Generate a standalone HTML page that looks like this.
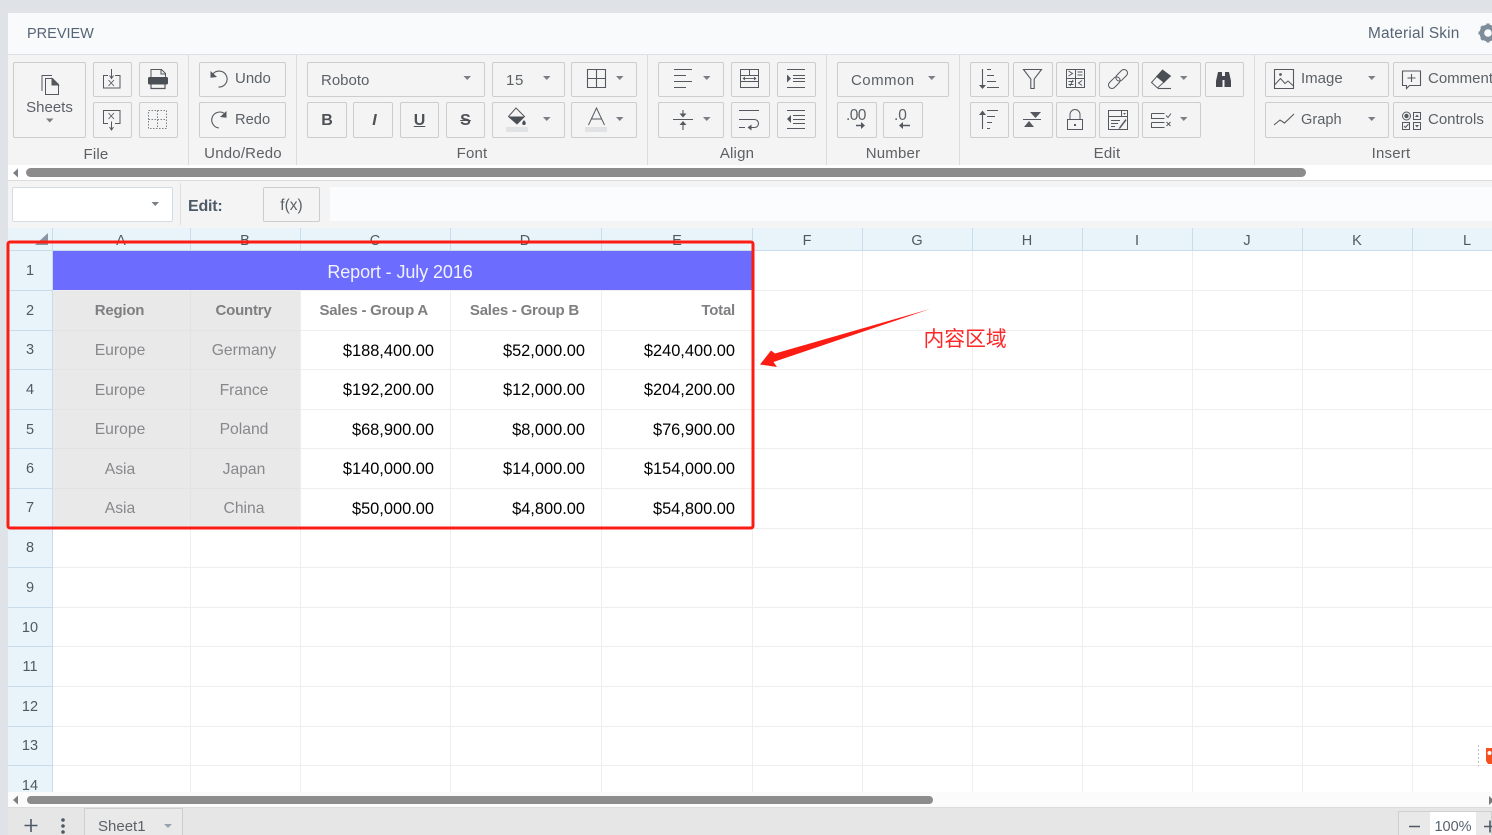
<!DOCTYPE html>
<html><head><meta charset="utf-8"><title>Preview</title>
<style>
html,body{margin:0;padding:0;width:1492px;height:835px;overflow:hidden;background:#dfe2e6}
body{position:relative;font-family:"Liberation Sans","Noto Sans CJK SC",sans-serif;color:#5a6068}
div{position:absolute;box-sizing:border-box}
.b{border:1px solid #cdcdcd;border-radius:2px;background:#f4f4f4}
.t{white-space:nowrap;height:20px;line-height:20px;font-size:15px;color:#5c6166;margin-top:1px}
.c{text-align:center}
.l{font-size:15px;color:#5d6064;text-align:center;letter-spacing:.2px}
.h{color:#4f5964;font-size:14.5px;text-align:center;width:60px}
.r{color:#4f5964;font-size:14.5px;text-align:center;left:8px;width:44px}
.g{color:#88888c;font-size:15.7px;text-align:center}
.gb{color:#7f7f82;font-size:15px;font-weight:bold;text-align:center;letter-spacing:-.23px}
.n{color:#000;font-size:16.4px;text-align:right}
.hb{color:#7f7f82;font-size:15px;font-weight:bold;text-align:right;letter-spacing:-.23px}
svg{position:absolute;left:0;top:0}
</style></head><body>

<div style="left:8px;top:13px;width:1484px;height:41px;background:#f9fafb"></div>
<div style="left:8px;top:54px;width:1484px;height:1px;background:#dde1e5"></div>
<div class="t" style="left:27px;top:23px;color:#566575;font-size:14.5px">PREVIEW</div>
<div class="t" style="left:1368px;top:23px;color:#566575;font-size:15.4px;letter-spacing:.2px">Material Skin</div>

<div style="left:8px;top:55px;width:1484px;height:110px;background:#f4f4f4"></div>
<div style="left:188px;top:55px;width:1px;height:110px;background:#dcdcdc"></div>
<div style="left:296px;top:55px;width:1px;height:110px;background:#dcdcdc"></div>
<div style="left:647px;top:55px;width:1px;height:110px;background:#dcdcdc"></div>
<div style="left:826px;top:55px;width:1px;height:110px;background:#dcdcdc"></div>
<div style="left:959px;top:55px;width:1px;height:110px;background:#dcdcdc"></div>
<div style="left:1254px;top:55px;width:1px;height:110px;background:#dcdcdc"></div>

<div class="b" style="left:13px;top:62px;width:73px;height:76px"></div>
<div class="b" style="left:93px;top:62px;width:39px;height:35px"></div>
<div class="b" style="left:139px;top:62px;width:39px;height:35px"></div>
<div class="b" style="left:93px;top:102px;width:39px;height:36px"></div>
<div class="b" style="left:139px;top:102px;width:39px;height:36px"></div>
<div class="b" style="left:199px;top:62px;width:87px;height:35px"></div>
<div class="b" style="left:199px;top:102px;width:87px;height:36px"></div>
<div class="b" style="left:307px;top:62px;width:178px;height:35px"></div>
<div class="b" style="left:492px;top:62px;width:73px;height:35px"></div>
<div class="b" style="left:571px;top:62px;width:66px;height:35px"></div>
<div class="b" style="left:307px;top:102px;width:40px;height:36px"></div>
<div class="b" style="left:353px;top:102px;width:40px;height:36px"></div>
<div class="b" style="left:400px;top:102px;width:39px;height:36px"></div>
<div class="b" style="left:446px;top:102px;width:39px;height:36px"></div>
<div class="b" style="left:492px;top:102px;width:73px;height:36px"></div>
<div class="b" style="left:571px;top:102px;width:66px;height:36px"></div>
<div class="b" style="left:658px;top:62px;width:66px;height:35px"></div>
<div class="b" style="left:731px;top:62px;width:39px;height:35px"></div>
<div class="b" style="left:777px;top:62px;width:39px;height:35px"></div>
<div class="b" style="left:658px;top:102px;width:66px;height:36px"></div>
<div class="b" style="left:731px;top:102px;width:39px;height:36px"></div>
<div class="b" style="left:777px;top:102px;width:39px;height:36px"></div>
<div class="b" style="left:837px;top:62px;width:112px;height:35px"></div>
<div class="b" style="left:837px;top:102px;width:40px;height:36px"></div>
<div class="b" style="left:883px;top:102px;width:40px;height:36px"></div>
<div class="b" style="left:970px;top:62px;width:39px;height:35px"></div>
<div class="b" style="left:1013px;top:62px;width:40px;height:35px"></div>
<div class="b" style="left:1056px;top:62px;width:40px;height:35px"></div>
<div class="b" style="left:1099px;top:62px;width:40px;height:35px"></div>
<div class="b" style="left:1142px;top:62px;width:59px;height:35px"></div>
<div class="b" style="left:1205px;top:62px;width:39px;height:35px"></div>
<div class="b" style="left:970px;top:102px;width:39px;height:36px"></div>
<div class="b" style="left:1013px;top:102px;width:40px;height:36px"></div>
<div class="b" style="left:1056px;top:102px;width:40px;height:36px"></div>
<div class="b" style="left:1099px;top:102px;width:40px;height:36px"></div>
<div class="b" style="left:1142px;top:102px;width:59px;height:36px"></div>
<div class="b" style="left:1265px;top:62px;width:124px;height:35px"></div>
<div class="b" style="left:1265px;top:102px;width:124px;height:36px"></div>
<div class="b" style="left:1393px;top:62px;width:120px;height:35px"></div>
<div class="b" style="left:1393px;top:102px;width:120px;height:36px"></div>

<div class="t c" style="left:13px;top:97px;width:73px;font-size:15px">Sheets</div>
<div class="t" style="left:235px;top:68px">Undo</div>
<div class="t" style="left:235px;top:109px;font-size:14.7px">Redo</div>
<div class="t" style="left:321px;top:70px">Roboto</div>
<div class="t" style="left:506px;top:70px;letter-spacing:.6px">15</div>
<div class="t c" style="left:307px;top:110px;width:40px;font-weight:bold;font-size:16px;color:#4e5257">B</div>
<div class="t c" style="left:353px;top:110px;width:43px;font-weight:bold;font-style:italic;font-size:16px;color:#4e5257">I</div>
<div class="t c" style="left:400px;top:110px;width:39px;font-weight:bold;font-size:16px;color:#4e5257;text-decoration:underline">U</div>
<div class="t c" style="left:446px;top:110px;width:39px;font-weight:bold;font-size:16px;color:#4e5257;text-decoration:line-through">S</div>
<div class="t" style="left:851px;top:70px;letter-spacing:.45px">Common</div>
<div class="t" style="left:1301px;top:68px">Image</div>
<div class="t" style="left:1301px;top:109px;font-size:14.6px">Graph</div>
<div class="t" style="left:1428px;top:68px">Comment</div>
<div class="t" style="left:1428px;top:109px">Controls</div>

<div class="t l" style="left:56px;top:144px;width:80px">File</div>
<div class="t l" style="left:193px;top:143px;width:100px">Undo/Redo</div>
<div class="t l" style="left:432px;top:143px;width:80px">Font</div>
<div class="t l" style="left:697px;top:143px;width:80px">Align</div>
<div class="t l" style="left:853px;top:143px;width:80px">Number</div>
<div class="t l" style="left:1067px;top:143px;width:80px">Edit</div>
<div class="t l" style="left:1351px;top:143px;width:80px">Insert</div>

<div style="left:8px;top:165px;width:1484px;height:15px;background:#fff"></div>
<div style="left:26px;top:168px;width:1280px;height:9px;background:#8c8c8c;border-radius:5px"></div>
<div style="left:8px;top:180px;width:1484px;height:1px;background:#dcdcdc"></div>

<div style="left:8px;top:181px;width:1484px;height:47px;background:#f4f4f4"></div>
<div style="left:12px;top:187px;width:161px;height:35px;background:#fff;border:1px solid #d3dbe4;border-radius:2px"></div>
<div style="left:180px;top:183px;width:1px;height:42px;background:#e0e0e0"></div>
<div class="t" style="left:188px;top:196px;font-weight:bold;font-size:16px;color:#4d5a68;letter-spacing:-.2px">Edit:</div>
<div class="b" style="left:263px;top:187px;width:57px;height:35px"></div>
<div class="t c" style="left:263px;top:195px;width:57px;font-size:15.5px">f(x)</div>
<div style="left:330px;top:187px;width:1162px;height:34px;background:#fbfcfd"></div>

<div style="left:8px;top:228px;width:1484px;height:23px;background:#e9f3fa"></div>
<div style="left:8px;top:228px;width:45px;height:564px;background:#e9f3fa"></div>
<div style="left:53px;top:251px;width:1439px;height:541px;background:#fff"></div>

<div style="left:53px;top:291px;width:248px;height:237px;background:#e9e9e9"></div>
<div style="left:53px;top:251px;width:699px;height:39px;background:#6c6cff"></div>

<svg width="1492" height="835" viewBox="0 0 1492 835" fill="none" style="shape-rendering:crispEdges">
<g stroke="#eeeeee">
<path d="M53 290.5H1492M53 330.5H1492M53 369.5H1492M53 409.5H1492M53 448.5H1492M53 488.5H1492M53 528.5H1492M53 567.5H1492M53 607.5H1492M53 646.5H1492M53 686.5H1492M53 726.5H1492M53 765.5H1492"/>
<path d="M190.5 290V792M300.5 290V792M450.5 290V792M601.5 290V792M752.5 251V792M862.5 251V792M972.5 251V792M1082.5 251V792M1192.5 251V792M1302.5 251V792M1412.5 251V792"/>
</g>
<g stroke="#e3e3e3"><path d="M53 330.5H300M53 369.5H300M53 409.5H300M53 448.5H300M53 488.5H300M190.5 290V528"/></g>
<g stroke="#c9dcec">
<path d="M8 250.5H1492M52.5 228V792M190.5 228V250M300.5 228V250M450.5 228V250M601.5 228V250M752.5 228V250M862.5 228V250M972.5 228V250M1082.5 228V250M1192.5 228V250M1302.5 228V250M1412.5 228V250"/>
<path d="M8 290.5H52M8 330.5H52M8 369.5H52M8 409.5H52M8 448.5H52M8 488.5H52M8 528.5H52M8 567.5H52M8 607.5H52M8 646.5H52M8 686.5H52M8 726.5H52M8 765.5H52"/>
</g>
</svg>

<div class="t h" style="left:91px;top:230px">A</div>
<div class="t h" style="left:215px;top:230px">B</div>
<div class="t h" style="left:345px;top:230px">C</div>
<div class="t h" style="left:495px;top:230px">D</div>
<div class="t h" style="left:647px;top:230px">E</div>
<div class="t h" style="left:777px;top:230px">F</div>
<div class="t h" style="left:887px;top:230px">G</div>
<div class="t h" style="left:997px;top:230px">H</div>
<div class="t h" style="left:1107px;top:230px">I</div>
<div class="t h" style="left:1217px;top:230px">J</div>
<div class="t h" style="left:1327px;top:230px">K</div>
<div class="t h" style="left:1437px;top:230px">L</div>

<div class="t r" style="top:260px">1</div>
<div class="t r" style="top:300px">2</div>
<div class="t r" style="top:339px">3</div>
<div class="t r" style="top:379px">4</div>
<div class="t r" style="top:419px">5</div>
<div class="t r" style="top:458px">6</div>
<div class="t r" style="top:497px">7</div>
<div class="t r" style="top:537px">8</div>
<div class="t r" style="top:577px">9</div>
<div class="t r" style="top:617px">10</div>
<div class="t r" style="top:656px">11</div>
<div class="t r" style="top:696px">12</div>
<div class="t r" style="top:735px">13</div>
<div class="t r" style="top:775px">14</div>

<div class="t c" style="left:250px;top:261px;width:300px;font-size:18px;color:#f2f2ff;letter-spacing:-.1px">Report - July 2016</div>

<div class="t gb" style="left:59.500px;top:300px;width:120px">Region</div>
<div class="t gb" style="left:183.500px;top:300px;width:120px">Country</div>
<div class="t hb" style="left:300px;top:300px;width:128px">Sales - Group A</div>
<div class="t hb" style="left:451px;top:300px;width:128px">Sales - Group B</div>
<div class="t hb" style="left:607px;top:300px;width:128px">Total</div>

<div class="t g" style="left:60px;top:340px;width:120px">Europe</div>
<div class="t g" style="left:184px;top:340px;width:120px">Germany</div>
<div class="t n" style="left:314px;top:340px;width:120px">$188,400.00</div>
<div class="t n" style="left:465px;top:340px;width:120px">$52,000.00</div>
<div class="t n" style="left:615px;top:340px;width:120px">$240,400.00</div>

<div class="t g" style="left:60px;top:380px;width:120px">Europe</div>
<div class="t g" style="left:184px;top:380px;width:120px">France</div>
<div class="t n" style="left:314px;top:379px;width:120px">$192,200.00</div>
<div class="t n" style="left:465px;top:379px;width:120px">$12,000.00</div>
<div class="t n" style="left:615px;top:379px;width:120px">$204,200.00</div>

<div class="t g" style="left:60px;top:419px;width:120px">Europe</div>
<div class="t g" style="left:184px;top:419px;width:120px">Poland</div>
<div class="t n" style="left:314px;top:419px;width:120px">$68,900.00</div>
<div class="t n" style="left:465px;top:419px;width:120px">$8,000.00</div>
<div class="t n" style="left:615px;top:419px;width:120px">$76,900.00</div>

<div class="t g" style="left:60px;top:459px;width:120px">Asia</div>
<div class="t g" style="left:184px;top:459px;width:120px">Japan</div>
<div class="t n" style="left:314px;top:458px;width:120px">$140,000.00</div>
<div class="t n" style="left:465px;top:458px;width:120px">$14,000.00</div>
<div class="t n" style="left:615px;top:458px;width:120px">$154,000.00</div>

<div class="t g" style="left:60px;top:498px;width:120px">Asia</div>
<div class="t g" style="left:184px;top:498px;width:120px">China</div>
<div class="t n" style="left:314px;top:498px;width:120px">$50,000.00</div>
<div class="t n" style="left:465px;top:498px;width:120px">$4,800.00</div>
<div class="t n" style="left:615px;top:498px;width:120px">$54,800.00</div>

<div style="left:8px;top:792px;width:1484px;height:15px;background:#fbfbfb"></div>
<div style="left:27px;top:796px;width:906px;height:8px;background:#8c8c8c;border-radius:4px"></div>
<div style="left:8px;top:807px;width:1484px;height:1px;background:#dcdcdc"></div>
<div style="left:8px;top:808px;width:1484px;height:27px;background:#e6e6e6"></div>
<div style="left:84px;top:808px;width:99px;height:27px;background:#e9e9e9;border:1px solid #cfcfcf;border-bottom:0"></div>
<div class="t" style="left:98px;top:816px;font-size:15px">Sheet1</div>
<div style="left:1398px;top:811px;width:94px;height:24px;background:#e9e9e9;border:1px solid #cfcfcf;border-bottom:0"></div>
<div style="left:1430px;top:812px;width:46px;height:23px;background:#fff"></div>
<div class="t c" style="left:1430px;top:816px;width:46px;font-size:14.5px;color:#556170">100%</div>

<svg width="1492" height="835" viewBox="0 0 1492 835" fill="none" stroke="#55595f" stroke-width="1">
<!-- carets -->
<g fill="#7a7f85" stroke="none">
<path d="M46 118.500h7.500l-3.750 4z"/>
<path d="M463.500 76h7.500l-3.750 4z"/>
<path d="M543 76h7.500l-3.750 4z"/>
<path d="M616 76h7.500l-3.750 4z"/>
<path d="M543 117h7.500l-3.750 4z"/>
<path d="M616 117h7.500l-3.750 4z"/>
<path d="M703 76h7.500l-3.750 4z"/>
<path d="M703 117h7.500l-3.750 4z"/>
<path d="M928 76h7.500l-3.750 4z"/>
<path d="M1180 76h7.500l-3.750 4z"/>
<path d="M1180 117h7.500l-3.750 4z"/>
<path d="M1368 76h7.500l-3.750 4z"/>
<path d="M1368 117h7.500l-3.750 4z"/>
<path d="M151.500 202h7.500l-3.750 4z"/>
<path d="M164 824h8l-4 4z" fill="#98a3b0"/>
<path d="M18 168.500v9l-5-4.500z"/>
<path d="M18 795.500v9l-5-4.500z"/>
<path d="M1489 796v9l5-4.500z" fill="#777"/>
<path d="M48 233v12H35z" fill="#8a95a3"/>
</g>
<!-- sheets -->
<path d="M42 91V75.500h10"/>
<path d="M45.500 78.500h7l6 6v10h-13z"/>
<path d="M52 78.500l6.500 6.500H52z" fill="#55595f"/>
<!-- import -->
<path d="M108 75.500h-4.500v12.500h16.500V75.500H115M111.500 69v8.500M109.500 75.500l2 3 2-3"/>
<path d="M108.500 80l5.500 6M114 80l-5.500 6" stroke-width=".9"/>
<!-- export -->
<path d="M108 123.500h-4.500v-13h16.500v13H115M111.500 121.500v8M109.500 127l2 3 2-3"/>
<path d="M108.500 113l5.500 6M114 113l-5.500 6" stroke-width=".9"/>
<!-- print -->
<path d="M151 78V69.500h10.500l4 4V78"/>
<path d="M161 70v4h4"/>
<rect x="148" y="77" width="20" height="7.500" rx="1.500" fill="#4a4f55" stroke="none"/>
<path d="M151 84v4.500h14V84" stroke-width="1.200"/>
<!-- dotted grid -->
<path d="M148.500 110.500h18v18h-18zM157.500 110.500v18M148.500 119.500h18" stroke="#7a7f85" stroke-dasharray="1.500 1.500"/>
<!-- undo / redo -->
<path d="M212.500 74.500A8 8 0 1 1 218.500 87" stroke-width="1.100"/>
<path d="M210.500 71v6.800l6.500-.8z" fill="#55595f" stroke="none"/>
<path d="M225 114A8 8 0 1 0 219 128" stroke-width="1.100"/>
<path d="M226.500 111v6.800l-6.500-.8z" fill="#55595f" stroke="none"/>
<!-- borders -->
<path d="M587.500 69.500h18v18h-18zM596.500 69.500v18M587.500 78.500h18" stroke-width="1.100"/>
<!-- fill -->
<path d="M516 108l8.500 8.500-7.500 7.500-8.500-7.500z"/>
<path d="M508.500 116.500h16l-7.500 7.500z" fill="#4a4f55" stroke="none"/>
<path d="M524 120c-1.300 1.800-1.800 2.400-1.800 3.300a1.800 1.800 0 0 0 3.600 0c0-.9-.5-1.500-1.800-3.300z" fill="#4a4f55" stroke="none"/>
<rect x="506" y="127" width="22" height="5" fill="#e0e2e3" stroke="none"/>
<!-- font color -->
<path d="M588.500 125L596.500 108l8 17M591.500 119h10"/>
<rect x="585" y="127" width="22" height="5" fill="#e0e2e3" stroke="none"/>
<!-- align left -->
<path d="M674 69.500h18M674 75.500h12M674 81.500h18M674 87.500h12"/>
<!-- merge -->
<path d="M740.500 69.500h18v18h-18zM740.500 75.500h18M749.500 69.500v6M740.500 81.500h18"/>
<path d="M743 78.500h13" stroke-width=".9"/>
<path d="M745 76.500l-2.500 2 2.500 2zM754 76.500l2.500 2-2.500 2z" fill="#55595f" stroke="none"/>
<!-- indent -->
<path d="M787 69.500h18M793 75.500h12M793 81.500h12M787 87.500h18M793 78.500h12"/>
<path d="M787 74.500v8l4-4z" fill="#55595f" stroke="none"/>
<!-- valign -->
<path d="M673 119.500h20M683 110v5M683 124v6" stroke-width="1.100"/>
<path d="M679.500 113.500h7l-3.500 4zM679.500 125h7l-3.500-4z" fill="#55595f" stroke="none"/>
<!-- wrap -->
<path d="M739 110.500h20M739 119.500h15.500a4 4 0 0 1 0 8H750M739 127.500h6" stroke-width="1.100"/>
<path d="M751.500 124.500v6l-4-3z" fill="#55595f" stroke="none"/>
<!-- outdent -->
<path d="M787 110.500h18M793 115.500h12M793 119.500h12M793 123.500h12M787 128.500h18"/>
<path d="M791 115v8l-4-4z" fill="#55595f" stroke="none"/>
<!-- decimals -->
<path d="M856 125.500h7" stroke-width="1.500"/>
<path d="M861 122v7l4-3.500z" fill="#55595f" stroke="none"/>
<path d="M902 125.500h8" stroke-width="1.500"/>
<path d="M903 122v7l-4-3.500z" fill="#55595f" stroke="none"/>
<!-- sort down -->
<path d="M982.500 69v17M987 69.500h4M987 75.500h7M987 81.500h9M987 87.500h12" stroke-width="1.100"/>
<path d="M979 85h7l-3.500 4z" fill="#55595f" stroke="none"/>
<!-- filter -->
<path d="M1023.500 69.500h18l-7.300 9.500v9.500h-3.400V79z" stroke-width="1.100"/>
<!-- conditional -->
<path d="M1066.500 69.500h18v18h-18zM1075.500 69.500v18M1066.500 78.500h18"/>
<path d="M1068.500 71l4 2.500-4 2.500M1077.500 72h5M1077.500 75h5M1068.500 81.500h5M1068.500 84.500h5M1073 80l-3 6M1082 80.500l-3.500 2.500 3.500 2.500"/>
<!-- link -->
<g transform="rotate(-45 1118 79)">
<rect x="1106" y="75.500" width="13.500" height="7" rx="3.500"/>
<rect x="1116.500" y="75.500" width="13.500" height="7" rx="3.500"/>
</g>
<!-- eraser -->
<path d="M1151.500 82.500l6 5.500 13-12-8-6z"/>
<path d="M1156 76.500l8 6.500 6.500-7-8-6z" fill="#4a4f55" stroke="none"/>
<path d="M1158 88.500h13" stroke-width="1.100"/>
<!-- binoculars -->
<path d="M1218 72h4v4h.5v11h-6.500v-6zM1229 72h-4v4h-.5v11h6.500v-6z" fill="#45494f" stroke="none"/>
<rect x="1222" y="76" width="3" height="4" fill="#45494f" stroke="none"/>
<!-- sort up -->
<path d="M982.500 112v17M987 110.500h11M987 116.500h8M987 122.500h5M987 128.500h3" stroke-width="1.100"/>
<path d="M979 115h7l-3.500-4.500z" fill="#55595f" stroke="none"/>
<!-- compress -->
<path d="M1023 119.500h18" stroke-width="1.100"/>
<path d="M1030 112h11l-5.500 6zM1024 127h10l-5-6z" fill="#55595f" stroke="none"/>
<!-- lock -->
<path d="M1067.500 119.500h15v10h-15z"/>
<path d="M1070 119.500v-5a5 5 0 0 1 10 0v5" />
<rect x="1074" y="124" width="2" height="2" fill="#55595f" stroke="none"/>
<!-- form -->
<path d="M1108.500 110.500h19v19h-19zM1108.500 116.500h19M1121.500 110.500v6M1111 120.500h9M1111 123.500h7M1111 126.500h4"/>
<path d="M1123 113h3l-1.500 1.800z" fill="#55595f" stroke="none"/>
<path d="M1125.500 119l-6 8-1 2 2-.8 6-8z" fill="#55595f" stroke="none"/>
<!-- validation -->
<path d="M1151.500 113.500h13M1151.500 113.500v5h13M1151.500 122.500h13M1151.500 122.500v5h13"/>
<path d="M1166 115.500l2 2 3-4M1166.500 122l4 4M1170.500 122l-4 4"/>
<!-- image -->
<path d="M1274.500 69.500h19v19h-19z" stroke-width="1.100"/>
<path d="M1274.500 85l6-6.500 4.500 5 3-2.500 5.500 5" />
<circle cx="1280.500" cy="74.500" r="1.400" fill="#55595f" stroke="none"/>
<!-- graph -->
<path d="M1274 125l6-5 4.500 3 9.500-9" stroke-width="1.100"/>
<!-- comment -->
<path d="M1402.500 71h18v14.500h-11l-3 3v-3h-4zM1411.500 74v8M1407.500 78h8" stroke-width="1.100"/>
<!-- controls -->
<circle cx="1406.500" cy="116" r="4"/>
<circle cx="1406.500" cy="116" r="2.200" fill="#55595f" stroke="none"/>
<path d="M1413.500 112.500h7v7h-7zM1402.500 122.500h7v7h-7zM1413.500 122.500h7v7h-7zM1404 126l1.500 1.500 3-3.500"/>
<path d="M1415 117h4l-2-2.500zM1415 125h4l-2 2.500z" fill="#55595f" stroke="none"/>
<!-- gear -->
<circle cx="1488" cy="33" r="6" stroke="#7f8c9a" stroke-width="5"/>
<path d="M1488 23.500v19M1478.500 33h19M1481.300 26.300l13.400 13.400M1494.700 26.300l-13.400 13.400" stroke="#7f8c9a" stroke-width="3"/>
<circle cx="1488" cy="33" r="3.800" fill="#f9fafb" stroke="none"/>
<!-- sheet bar -->
<path d="M24.500 825.500h13M31 819v13M1409 826.500h11M1484 826.500h12M1490 820.500v12" stroke="#4d5964" stroke-width="1.600"/>
<circle cx="63" cy="820" r="1.800" fill="#4d5964" stroke="none"/>
<circle cx="63" cy="826" r="1.800" fill="#4d5964" stroke="none"/>
<circle cx="63" cy="832" r="1.800" fill="#4d5964" stroke="none"/>
<!-- orange widget -->
<path d="M1478.500 745v21" stroke="#bbbbbb" stroke-dasharray="2 2"/>
<path d="M1486 748h8v16h-6l-2-3z" fill="#f4511e" stroke="none"/>
<circle cx="1489.500" cy="753" r="2" fill="#fff" stroke="none"/>
<!-- red annotation -->
<rect x="8" y="242" width="745" height="286" rx="2" stroke="#fb1d14" stroke-width="3"/>
<path d="M930 309L775 353.500 771 350.500 760 364.500 777 367 773.500 362z" fill="#fb1d14" stroke="none"/>
</svg>

<div class="t" style="left:923.500px;top:326px;height:26px;line-height:26px;font-size:20.800px;color:#ff2626;font-family:'Liberation Sans','Noto Sans CJK SC',sans-serif">内容区域</div>
<div class="t" style="left:846px;top:108px;height:14px;line-height:14px;font-size:15.500px;letter-spacing:-.6px">.00</div>
<div class="t" style="left:894px;top:108px;height:14px;line-height:14px;font-size:15.500px">.0</div>

</body></html>
